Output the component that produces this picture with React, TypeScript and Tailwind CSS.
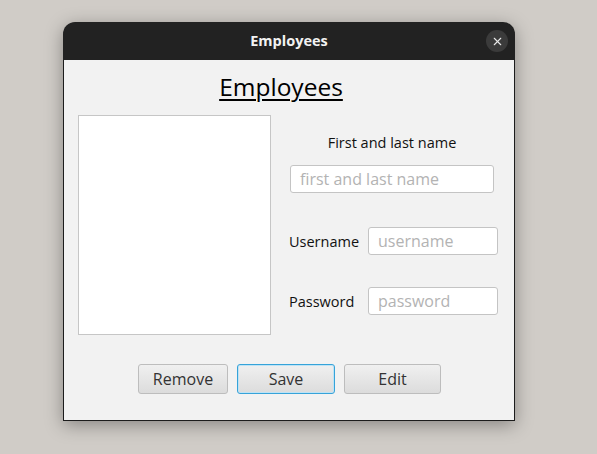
import { X } from 'lucide-react';

const font = { fontFamily: '"Open Sans", "DejaVu Sans", sans-serif' };

function Field({ placeholder, className }: { placeholder: string; className: string }) {
  return (
    <div
      className={`flex h-[28px] items-center rounded-[3px] border border-[#c4c4c4] bg-white px-[9px] text-[16px] text-[#b3b3b3] ${className}`}
    >
      {placeholder}
    </div>
  );
}

function Btn({ label, focused }: { label: string; focused?: boolean }) {
  return (
    <div
      className={`flex h-[30px] items-center justify-center rounded-[3px] border bg-gradient-to-b from-[#f0f0f0] to-[#dcdcdc] text-[16px] text-[#333] ${
        focused ? 'border-[#36a3d9] shadow-[inset_0_0_0_1px_#bfe3f5]' : 'border-[#bdbdbd]'
      }`}
    >
      {label}
    </div>
  );
}

export default function App() {
  return (
    <div className="h-[454px] w-[597px] bg-[#d0ccc7] pl-[63px] pt-[22px]" style={font}>
      <div className="w-[452px] rounded-t-[12px] shadow-[0_4px_18px_rgba(0,0,0,0.35)]">
        <div className="relative flex h-[38px] items-center justify-center rounded-t-[12px] bg-[#222222]">
          <span className="text-[14.5px] font-bold text-[#f2f2f2]">Employees</span>
          <div className="absolute right-[7px] top-[8px] flex h-[22px] w-[22px] items-center justify-center rounded-full bg-[#3b3b3b]">
            <X size={13} strokeWidth={2} className="text-[#e8e8e8]" />
          </div>
        </div>
        <div className="h-[361px] border border-t-0 border-[#1c1c1c] bg-[#f2f2f2]">
          <div className="flex justify-center pr-[16px] pt-[12px]">
            <span className="text-[24.5px] leading-[30px] text-black underline decoration-[2px] underline-offset-[3px]">
              Employees
            </span>
          </div>
          <div className="mt-[13px] flex pl-[14px]">
            <div className="h-[220px] w-[193px] border border-[#c6c6c6] bg-white" />
            <div className="ml-[18px] flex w-[209px] flex-col pt-[18px]">
              <div className="flex justify-center pr-[3px] text-[14.5px] leading-[20px] text-[#111]">First and last name</div>
              <Field placeholder="first and last name" className="ml-[1px] mt-[12px] w-[204px]" />
              <div className="mt-[34px] flex items-center">
                <span className="w-[79px] pt-[2px] text-[14.5px] text-[#111]">Username</span>
                <Field placeholder="username" className="w-[130px]" />
              </div>
              <div className="mt-[32px] flex items-center">
                <span className="w-[79px] pt-[2px] text-[14.5px] text-[#111]">Password</span>
                <Field placeholder="password" className="w-[130px]" />
              </div>
            </div>
          </div>
          <div className="mt-[29px] flex justify-center gap-[9px] pl-[1px]">
            <div className="w-[90px]">
              <Btn label="Remove" />
            </div>
            <div className="w-[98px]">
              <Btn label="Save" focused />
            </div>
            <div className="w-[97px]">
              <Btn label="Edit" />
            </div>
          </div>
        </div>
      </div>
    </div>
  );
}
